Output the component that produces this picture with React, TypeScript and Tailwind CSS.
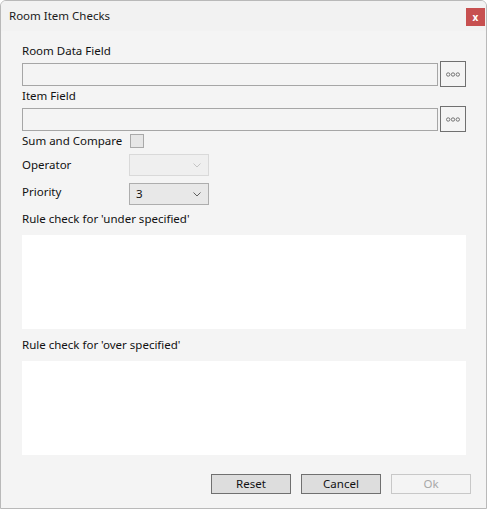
import React from 'react'

function Chevron({ disabled }: { disabled?: boolean }) {
  return (
    <svg width="8" height="5" viewBox="0 0 8 5" className="absolute right-[7px] top-[8px]">
      <path d="M0.5 0.5 L4 4 L7.5 0.5" fill="none" stroke={disabled ? '#c4c4c4' : '#606060'} strokeWidth="1" />
    </svg>
  )
}

function BrowseButton() {
  return (
    <div className="w-[26px] h-[26px] border border-[#707070] bg-[#f4f4f4] flex items-center justify-center">
      <svg width="14" height="5" viewBox="0 0 14 5">
        <circle cx="2.2" cy="2.5" r="1.7" fill="none" stroke="#6a6a6a" strokeWidth="0.9" />
        <circle cx="7" cy="2.5" r="1.7" fill="none" stroke="#6a6a6a" strokeWidth="0.9" />
        <circle cx="11.8" cy="2.5" r="1.7" fill="none" stroke="#6a6a6a" strokeWidth="0.9" />
      </svg>
    </div>
  )
}

function FieldRow() {
  return (
    <div className="flex items-center gap-[2px] h-[26px]">
      <div className="w-[416px] h-[23px] border border-[#a6a6a6] bg-[#f4f4f4]" />
      <BrowseButton />
    </div>
  )
}

function DialogButton({ label, disabled }: { label: string; disabled?: boolean }) {
  return (
    <div
      className={
        disabled
          ? 'w-[80px] h-[20px] border border-[#c8c8c8] bg-[#f4f4f4] text-[#a8a8a8] flex items-center justify-center'
          : 'w-[80px] h-[20px] border border-[#707070] bg-[#dddddd] text-[#111] flex items-center justify-center'
      }
    >
      {label}
    </div>
  )
}

export default function App() {
  return (
    <div
      className="w-[487px] h-[510px] bg-white text-[11.5px] text-[#111]"
      style={{ fontFamily: '"Segoe UI", "Noto Sans", "Open Sans", sans-serif' }}
    >
      <div className="w-[487px] h-[509px] border border-[#b9b9b9] rounded-t-[6px] bg-[#f4f4f4] flex flex-col overflow-hidden">
        <div className="h-[30px] bg-[#f2f2f2] flex items-center justify-between pl-[8px] pr-[1px]">
          <span className="text-[11.5px] leading-none text-[#1a1a1a]">Room Item Checks</span>
          <div className="w-[19px] h-[18px] bg-[#c75050] text-white text-[10px] font-bold flex items-center justify-center leading-none mt-[1px]">
            x
          </div>
        </div>

        <div className="flex flex-col pl-[21px] pt-[13px]">
          <div className="h-[17px] leading-[14px]">Room Data Field</div>
          <FieldRow />
          <div className="h-[19px] leading-[18px]">Item Field</div>
          <FieldRow />

          <div className="flex items-center h-[18px]">
            <span className="w-[108px]">Sum and Compare</span>
            <div className="w-[14px] h-[14px] border border-[#a9a9a9] bg-[#e6e6e6]" />
          </div>

          <div className="flex items-center h-[22px] mt-[4px]">
            <span className="w-[107px]">Operator</span>
            <div className="relative w-[80px] h-[22px] border border-[#d9d9d9] bg-[#efefef]">
              <Chevron disabled />
            </div>
          </div>

          <div className="flex items-center h-[22px] mt-[7px]">
            <span className="w-[107px] -mt-[4px]">Priority</span>
            <div className="relative w-[80px] h-[22px] border border-[#adadad] bg-[#e8e8e8] flex items-center pl-[6px]">
              3
              <Chevron />
            </div>
          </div>

          <div className="h-[20px] leading-[20px] mt-[4px]">Rule check for 'under specified'</div>
          <div className="w-[444px] h-[94px] bg-white mt-[6px]" />

          <div className="h-[20px] leading-[20px] mt-[6px]">Rule check for 'over specified'</div>
          <div className="w-[444px] h-[94px] bg-white mt-[6px]" />

          <div className="flex justify-end gap-[10px] pr-[15px] mt-[19px]">
            <DialogButton label="Reset" />
            <DialogButton label="Cancel" />
            <DialogButton label="Ok" disabled />
          </div>
        </div>
      </div>
    </div>
  )
}
